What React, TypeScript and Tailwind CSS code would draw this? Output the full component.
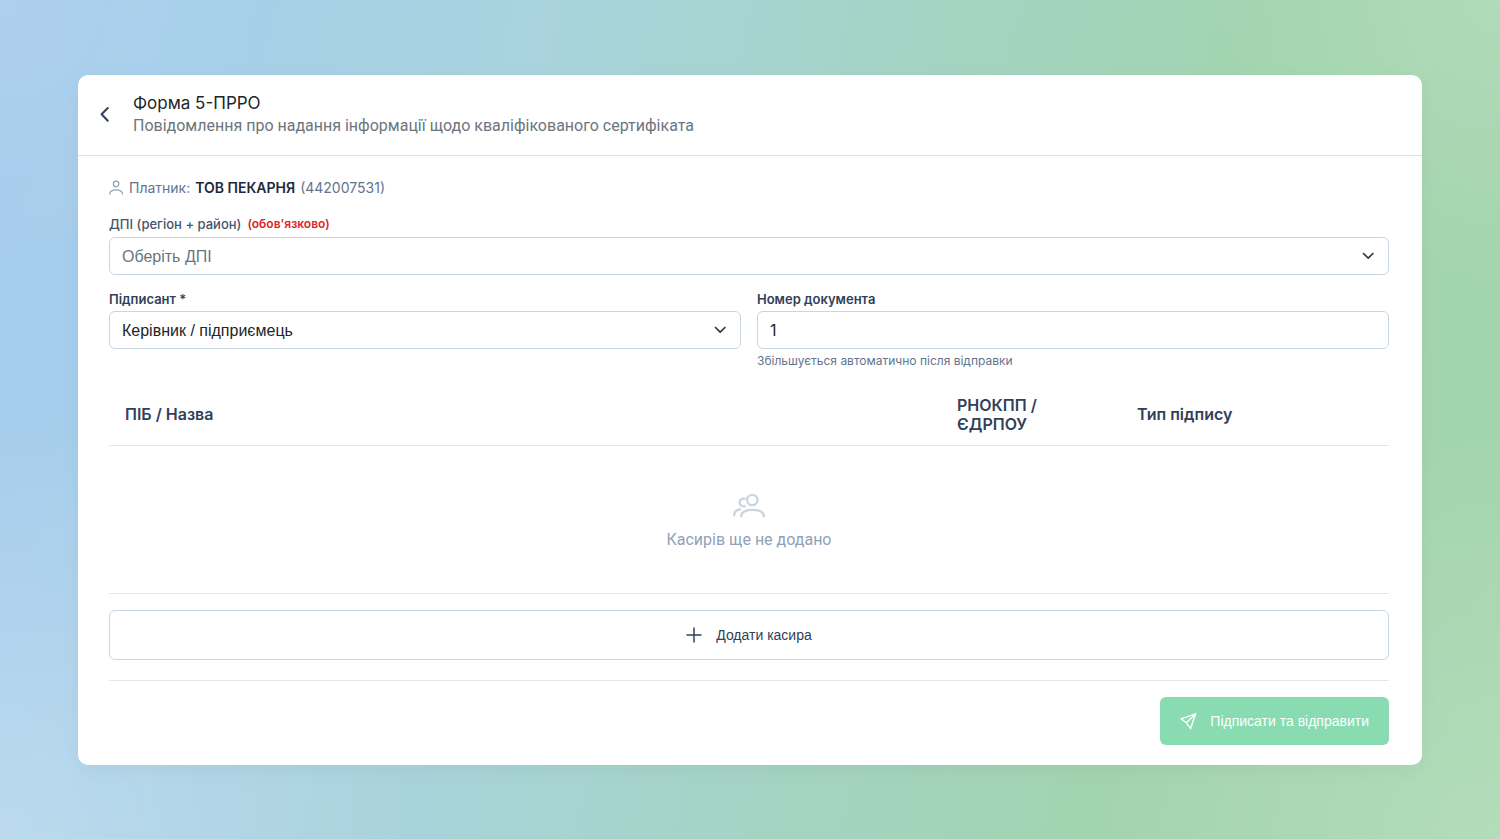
import React, { useState } from "react";

const fieldClass =
  "h-[38px] w-full rounded-md border border-slate-300 bg-white pl-3 text-base outline-none focus:border-slate-400";

const labelClass = "block pb-[2px] text-[13px] leading-5 font-semibold text-slate-700";

interface SelectFieldProps {
  id: string;
  value: string;
  onChange: (value: string) => void;
  options: { value: string; label: string }[];
}

const ChevronDown = () => (
  <svg
    className="pointer-events-none absolute top-1/2 right-3 h-4 w-4 -translate-y-1/2"
    viewBox="0 0 16 16"
    fill="none"
    stroke="#343a40"
    strokeWidth="1.7"
    strokeLinecap="round"
    strokeLinejoin="round"
  >
    <path d="m2.500 5.500 4.700 4.700 4.700-4.700" />
  </svg>
);

const SelectField = ({ id, value, onChange, options }: SelectFieldProps) => (
  <div className="relative">
    <select
      id={id}
      value={value}
      onChange={(e) => onChange(e.target.value)}
      className={`${fieldClass} appearance-none pt-0.5 pr-10 font-['Liberation_Sans',sans-serif] ${
        value ? "text-[#212529]" : "text-[#6c757d]"
      }`}
    >
      {options.map((option) => (
        <option key={option.value} value={option.value}>
          {option.label}
        </option>
      ))}
    </select>
    <ChevronDown />
  </div>
);

const UserIcon = () => (
  <svg className="h-4 w-4" viewBox="0 0 16 16" fill="none" stroke="#94a3b8" strokeWidth="1.3" strokeLinecap="round">
    <circle cx="7.100" cy="3.900" r="2.700" />
    <path d="M.7 14c.2-2.900 2.700-4.200 6.400-4.200s6.200 1.300 6.400 4.200" />
  </svg>
);

const UsersIcon = () => (
  <svg className="h-8 w-8" viewBox="0 0 32 32" fill="none" stroke="#cbd5e1" strokeWidth="2.300" strokeLinecap="round">
    <circle cx="19.300" cy="10" r="5.200" />
    <path d="M8.300 26.400v-.7c.3-4 4-5.900 11.200-5.900s11 1.900 11.400 5.900v.7" />
    <path d="M11.500 8.800c-2.300-.7-4.900 1-4.900 3.700 0 2.600 2.700 4.500 5.300 3.600" />
    <path d="M1.200 25.600c0-3.700 2.100-6 6-6.200" />
  </svg>
);

const SendIcon = () => (
  <svg
    className="h-[18px] w-[18px]"
    viewBox="0 0 18 18"
    fill="none"
    stroke="currentColor"
    strokeWidth="1.400"
    strokeLinecap="round"
    strokeLinejoin="round"
  >
    <path d="M15.700 1.800 1 6.800l5.300 4 4.300 5.700 5.100-14.700ZM15.700 1.800l-9.400 9" />
  </svg>
);

export default function App() {
  const [office, setOffice] = useState("");
  const [signer, setSigner] = useState("head");
  const [docNumber, setDocNumber] = useState("1");

  return (
    <div className="flex min-h-screen flex-col justify-center bg-[radial-gradient(circle_at_0%_100%,rgba(255,255,255,0.24),transparent_24%),radial-gradient(circle_at_0%_0%,rgba(255,255,255,0.08),transparent_16%),radial-gradient(circle_at_100%_0%,rgba(255,255,255,0.15),transparent_17%),radial-gradient(circle_at_100%_100%,rgba(255,255,255,0.18),transparent_24%),linear-gradient(102deg,#a6cced_0%,#a6ceeb_10%,#a9d3dc_34%,#a4d3c0_59%,#a2d4af_76%,#a3d5ab_100%)] px-[78px] font-[Inter,sans-serif]">
      <main className="rounded-[10px] bg-white shadow-[0_6px_20px_rgba(0,0,0,0.04)]">
        <header className="flex items-center border-b border-[#dee2e6] pt-4 pr-8 pb-[18px] pl-4">
          <button type="button" aria-label="Назад" className="flex w-[39px] cursor-pointer pl-[3px]">
            <svg
              className="h-[18px] w-[18px]"
              viewBox="0 0 18 18"
              fill="none"
              stroke="#334155"
              strokeWidth="2"
              strokeLinecap="round"
              strokeLinejoin="round"
            >
              <path d="M10.800 3 4.600 9.300l6.200 6.400" />
            </svg>
          </button>
          <div>
            <h1 className="text-[17px] leading-6 text-[#212529]">Форма 5-ПРРО</h1>
            <p className="font-[Roboto,sans-serif] text-base leading-[22px] text-[#6c757d]">
              Повідомлення про надання інформації щодо кваліфікованого сертифіката
            </p>
          </div>
        </header>

        <form className="pt-[22px] pr-[33px] pb-5 pl-[31px]" onSubmit={(e) => e.preventDefault()}>
          <div className="flex items-center text-sm leading-5 text-slate-500">
            <UserIcon />
            <span className="ml-1">Платник:</span>
            <strong className="ml-[5px] font-semibold text-slate-800">ТОВ ПЕКАРНЯ</strong>
            <span className="ml-[5px]">(442007531)</span>
          </div>

          <div className="mt-4">
            <label htmlFor="office" className="flex items-center pb-[3px] text-[13px] leading-5 font-medium text-slate-600">
              ДПІ (регіон + район)
              <span className="ml-[6px] text-xs leading-5 font-semibold text-[#dc2626]">(обов'язково)</span>
            </label>
            <SelectField
              id="office"
              value={office}
              onChange={setOffice}
              options={[{ value: "", label: "Оберіть ДПІ" }]}
            />
          </div>

          <div className="mt-[14px] grid grid-cols-2 gap-4">
            <div>
              <label htmlFor="signer" className={labelClass}>
                Підписант *
              </label>
              <SelectField
                id="signer"
                value={signer}
                onChange={setSigner}
                options={[{ value: "head", label: "Керівник / підприємець" }]}
              />
            </div>
            <div>
              <label htmlFor="doc-number" className={labelClass}>
                Номер документа
              </label>
              <input
                id="doc-number"
                type="text"
                value={docNumber}
                onChange={(e) => setDocNumber(e.target.value)}
                className={`${fieldClass} text-[#212529]`}
              />
              <p className="mt-1 text-xs leading-4 text-slate-500">Збільшується автоматично після відправки</p>
            </div>
          </div>

          <table className="mt-[14px] w-full table-fixed border-b border-slate-200 text-left">
            <thead>
              <tr className="border-b border-slate-200 text-base leading-[19px] text-slate-700">
                <th className="px-4 pt-[13px] pb-[11px] font-semibold">ПІБ / Назва</th>
                <th className="w-[180px] pt-[13px] pr-16 pb-[11px] pl-4 font-semibold">РНОКПП / ЄДРПОУ</th>
                <th className="w-[200px] px-4 pt-[13px] pb-[11px] font-semibold">Тип підпису</th>
                <th className="w-[68px]" />
              </tr>
            </thead>
            <tbody>
              <tr>
                <td colSpan={4} className="pt-11 pb-[41px] text-slate-400">
                  <div className="flex flex-col items-center gap-[6px]">
                    <UsersIcon />
                    <span className="font-[Roboto,sans-serif]">Касирів ще не додано</span>
                  </div>
                </td>
              </tr>
            </tbody>
          </table>

          <button
            type="button"
            className="mt-4 flex h-[50px] w-full cursor-pointer items-center justify-center gap-[14px] rounded-md border border-slate-300 font-['Liberation_Sans',sans-serif] text-sm text-slate-700 hover:bg-slate-50"
          >
            <svg className="h-4 w-4" viewBox="0 0 16 16" stroke="currentColor" strokeWidth="1.500" strokeLinecap="round">
              <path d="M8 1v14M1 8h14" />
            </svg>
            Додати касира
          </button>

          <div className="mt-5 flex justify-end border-t border-slate-200 pt-4">
            <button
              type="submit"
              className="flex h-12 items-center gap-3 rounded-md bg-[#89dbb1] px-5 font-['Liberation_Sans',sans-serif] text-sm text-white"
            >
              <SendIcon />
              Підписати та відправити
            </button>
          </div>
        </form>
      </main>
    </div>
  );
}
